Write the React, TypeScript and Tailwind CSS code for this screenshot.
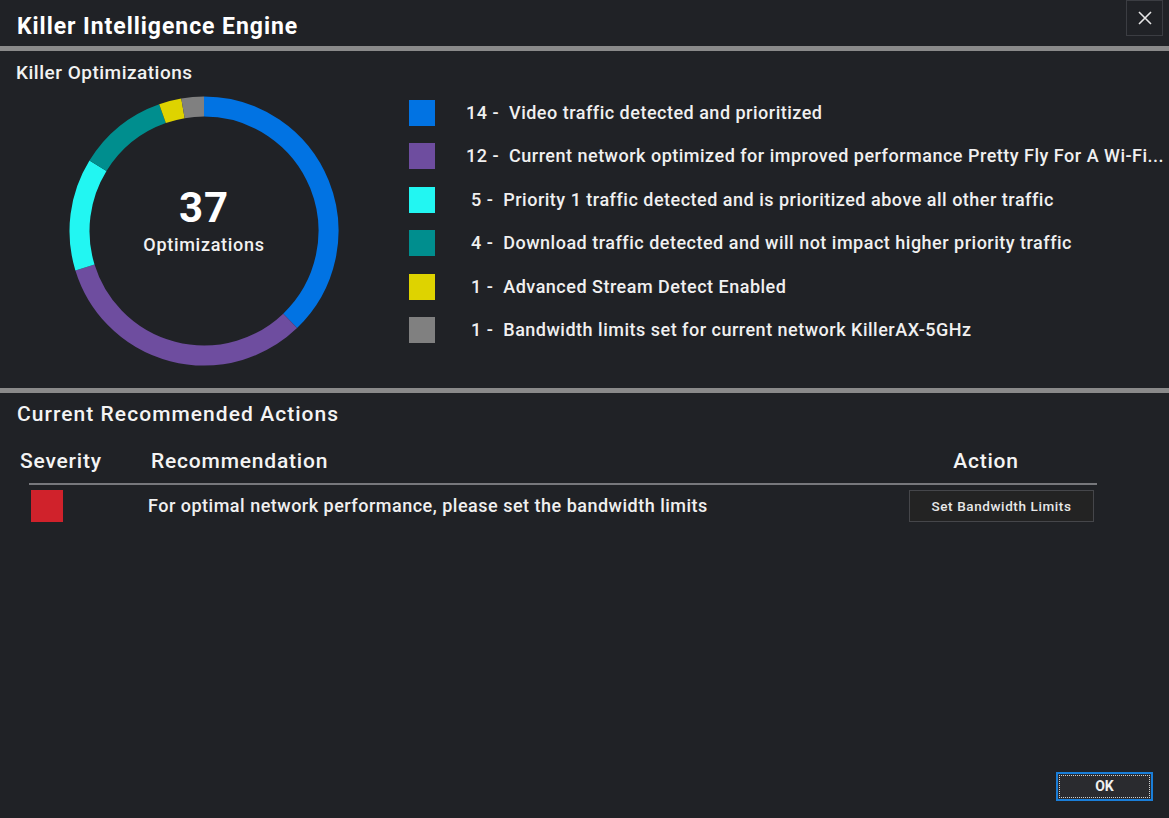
import React from "react";

const FONT = { fontFamily: "Roboto, 'Noto Sans', 'Liberation Sans', sans-serif" };

const ITEMS = [
  { n: "14", color: "#0173e3", text: "Video traffic detected and prioritized" },
  { n: "12", color: "#6e4d9f", text: "Current network optimized for improved performance Pretty Fly For A Wi-Fi..." },
  { n: " 5", color: "#22f6f2", text: "Priority 1 traffic detected and is prioritized above all other traffic" },
  { n: " 4", color: "#008e8e", text: "Download traffic detected and will not impact higher priority traffic" },
  { n: " 1", color: "#ded300", text: "Advanced Stream Detect Enabled" },
  { n: " 1", color: "#808080", text: "Bandwidth limits set for current network KillerAX-5GHz" },
];

function arc(cx: number, cy: number, r: number, a0: number, a1: number) {
  const p = (a: number) => {
    const rad = ((a - 90) * Math.PI) / 180;
    return [cx + r * Math.cos(rad), cy + r * Math.sin(rad)];
  };
  const [x0, y0] = p(a0);
  const [x1, y1] = p(a1);
  const large = a1 - a0 > 180 ? 1 : 0;
  return `M ${x0} ${y0} A ${r} ${r} 0 ${large} 1 ${x1} ${y1}`;
}

function Donut() {
  const total = 37;
  let acc = 0;
  const segs = ITEMS.map((it) => {
    const v = Number(it.n.trim());
    const a0 = (acc / total) * 360;
    acc += v;
    const a1 = (acc / total) * 360;
    return { a0, a1, color: it.color };
  });
  return (
    <div className="relative h-[270px] w-[270px] shrink-0">
      <svg width="270" height="270" viewBox="0 0 270 270" className="absolute inset-0">
        {segs.map((s, i) => (
          <path key={i} d={arc(135, 135, 124.5, s.a0, s.a1)} stroke={s.color} strokeWidth="20" fill="none" />
        ))}
      </svg>
      <div className="absolute inset-0 flex flex-col items-center justify-center pb-[21px]">
        <div className="text-[42px] font-bold leading-[44px] tracking-[1px] text-white">37</div>
        <div className="mt-[4px] text-[18px] font-medium leading-[22px] tracking-[0.7px] text-[#f2f2f2]">Optimizations</div>
      </div>
    </div>
  );
}

export default function App() {
  return (
    <div className="relative flex h-[818px] w-full flex-col overflow-hidden bg-[#202226] text-white" style={FONT}>
      {/* title */}
      <div className="flex h-[46px] shrink-0 items-start justify-between pl-[17px] pr-[6px]">
        <h1 className="mt-[14px] text-[23px] font-bold leading-[26px] tracking-[0.95px]">Killer Intelligence Engine</h1>
        <button className="flex h-[36px] w-[37px] items-center justify-center border border-[#3b3d42] bg-[#202226]">
          <svg width="14" height="14" viewBox="0 0 14 14">
            <path d="M1 1 L13 13 M13 1 L1 13" stroke="#e6e6e6" strokeWidth="1.6" />
          </svg>
        </button>
      </div>
      <div className="h-[5px] shrink-0 bg-[#8a8a8a]" />

      {/* optimizations */}
      <section className="shrink-0 pl-[16px] pt-[11px]">
        <h2 className="text-[19px] font-medium leading-[22px] tracking-[0.5px] text-[#f2f2f2]">Killer Optimizations</h2>
        <div className="flex items-start">
          <div className="ml-[53px] mt-[12px] pb-[22px]">
            <Donut />
          </div>
          <ul className="ml-[70px] mt-[7px] min-w-0 flex-1">
            {ITEMS.map((it, i) => (
              <li key={i} className="flex h-[43.5px] items-center">
                <span className="h-[26px] w-[26px] shrink-0" style={{ background: it.color }} />
                <span className="ml-[31px] min-w-0 whitespace-pre text-[18px] font-medium leading-[22px] tracking-[0.5px] text-[#f0f0f0]">
                  {it.n} -  {it.text}
                </span>
              </li>
            ))}
          </ul>
        </div>
      </section>
      <div className="h-[5px] shrink-0 bg-[#8a8a8a]" />

      {/* recommended actions */}
      <section className="flex-1 pl-[17px] pt-[9px]">
        <h2 className="text-[21px] font-medium leading-[24px] tracking-[1.05px] text-[#f4f4f4]">Current Recommended Actions</h2>
        <div className="mt-[23px] w-[1080px]">
          <div className="flex h-[24px] items-center text-[21px] font-medium leading-[24px] tracking-[0.8px] text-[#f4f4f4]">
            <span className="ml-[3px] w-[131px]">Severity</span>
            <span className="flex-1">Recommendation</span>
            <span className="w-[184px] pr-[38px] text-center">Action</span>
          </div>
          <div className="ml-[12px] mt-[10px] h-[2px] w-[1068px] bg-[#77787c]" />
          <div className="mt-[5px] flex h-[32px] items-center">
            <span className="ml-[14px] h-[32px] w-[32px] bg-[#d0222b]" />
            <span className="ml-[85px] flex-1 text-[18px] font-medium leading-[22px] tracking-[0.5px] text-[#f0f0f0]">
              For optimal network performance, please set the bandwidth limits
            </span>
            <button className="mr-[3px] h-[32px] w-[185px] border border-[#45464a] bg-[#232323] text-[13.5px] font-medium tracking-[0.6px] text-[#e8e8e8]">
              Set Bandwidth Limits
            </button>
          </div>
        </div>
      </section>

      <div className="absolute bottom-[17px] right-[16px]">
        <button className="flex h-[29px] w-[97px] items-center justify-center border-[2px] border-[#1a7ed8] bg-[#2a2b2f] p-[1px]">
          <span className="flex h-full w-full items-center justify-center border border-dotted border-[#cfcfcf] text-[14px] font-bold text-[#f0f0f0]">
            OK
          </span>
        </button>
      </div>
    </div>
  );
}
